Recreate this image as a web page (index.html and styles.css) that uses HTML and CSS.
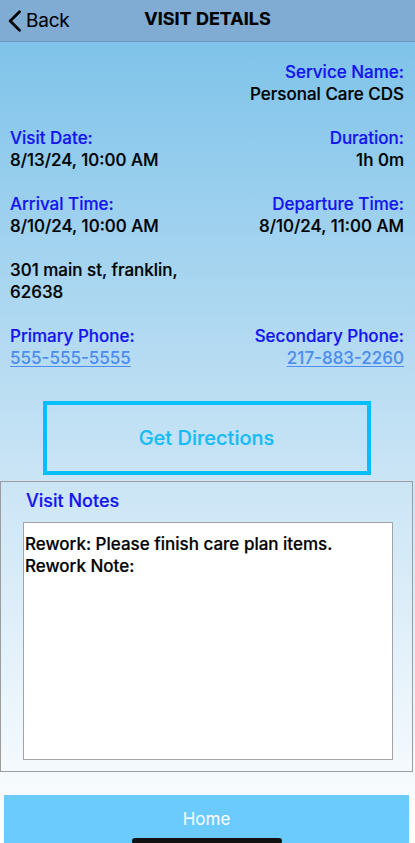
FILE: index.html
```html
<!DOCTYPE html>
<html>
<head>
<meta charset="utf-8">
<link rel="stylesheet" href="styles.css">
</head>
<body>
<div class="screen">
  <header class="topbar">
    <div class="back">
      <svg class="chev" width="15" height="22" viewBox="0 0 15 22"><path d="M12.5 1.8 L3.2 11 L12.5 20.2" fill="none" stroke="#000" stroke-width="2.8" stroke-linecap="round" stroke-linejoin="round"/></svg>
      <span>Back</span>
    </div>
    <div class="title">VISIT DETAILS</div>
  </header>
  <main class="content">
    <div class="details">
      <div class="row right-only">
        <div class="field right">
          <div class="label">Service Name:</div>
          <div class="value">Personal Care CDS</div>
        </div>
      </div>
      <div class="row">
        <div class="field">
          <div class="label">Visit Date:</div>
          <div class="value">8/13/24, 10:00 AM</div>
        </div>
        <div class="field right">
          <div class="label">Duration:</div>
          <div class="value">1h 0m</div>
        </div>
      </div>
      <div class="row">
        <div class="field">
          <div class="label">Arrival Time:</div>
          <div class="value">8/10/24, 10:00 AM</div>
        </div>
        <div class="field right">
          <div class="label">Departure Time:</div>
          <div class="value">8/10/24, 11:00 AM</div>
        </div>
      </div>
      <div class="row">
        <div class="field address">
          <div class="value">301 main st, franklin,<br>62638</div>
        </div>
      </div>
      <div class="row">
        <div class="field">
          <div class="label">Primary Phone:</div>
          <a class="phone" href="#">555-555-5555</a>
        </div>
        <div class="field right">
          <div class="label">Secondary Phone:</div>
          <a class="phone" href="#">217-883-2260</a>
        </div>
      </div>
    </div>
    <div class="btn-wrap">
      <div class="directions">Get Directions</div>
    </div>
    <section class="notes">
      <div class="notes-title">Visit Notes</div>
      <div class="notes-box">Rework: Please finish care plan items.<br>Rework Note:</div>
    </section>
    <div class="home-wrap">
      <div class="home">Home</div>
    </div>
  </main>
  <div class="indicator"></div>
</div>
</body>
</html>
```
FILE: styles.css
```css
* { box-sizing: border-box; }
html, body { margin: 0; padding: 0; }
body {
  width: 415px;
  height: 843px;
  overflow: hidden;
  font-family: Inter, "Noto Sans", sans-serif;
  font-size: 17px;
  color: #000;
  -webkit-text-stroke: 0.2px currentColor;
}
.screen {
  position: relative;
  width: 415px;
  height: 843px;
  display: flex;
  flex-direction: column;
  background: linear-gradient(to bottom, #7fc3ea 0px, #7fc3ea 42px, #c9e4f5 470px, #f7fbfe 790px, #ffffff 843px);
}
.topbar {
  height: 42px;
  background: #80acd4;
  border-bottom: 1px solid #6e98bf;
  display: flex;
  align-items: center;
  position: relative;
  flex: none;
}
.back {
  display: flex;
  align-items: center;
  gap: 4px;
  padding-left: 7px;
  font-size: 19px;
  letter-spacing: -0.2px;
  -webkit-text-stroke: 0.1px currentColor;
}
.chev { display: block; }
.title {
  position: absolute;
  left: 0;
  right: 0;
  top: 0;
  height: 41px;
  line-height: 38px;
  text-align: center;
  font-weight: 700;
  font-size: 18px;
  -webkit-text-stroke: 0.2px currentColor;
  pointer-events: none;
}
.content {
  flex: 1;
  display: flex;
  flex-direction: column;
}
.details {
  padding: 19px 11px 0 10px;
  display: flex;
  flex-direction: column;
  gap: 22px;
}
.row {
  display: flex;
  justify-content: space-between;
}
.right-only { justify-content: flex-end; }
.field { line-height: 22px; }
.field.right { text-align: right; }
.label {
  color: #1414ee;
  font-weight: 500;
}
.value { font-weight: 500; }
.phone {
  color: #4d8df0;
  text-decoration: underline;
  text-underline-offset: 2px;
  font-weight: 500;
  -webkit-text-stroke: 0.1px currentColor;
}
.btn-wrap {
  display: flex;
  justify-content: center;
  padding-top: 32px;
  padding-right: 2px;
}
.directions {
  width: 328px;
  height: 74px;
  border: 4px solid #05bffb;
  display: flex;
  align-items: center;
  justify-content: center;
  color: #16bcf6;
  font-size: 20px;
  font-weight: 500;
}
.notes {
  margin-top: 6px;
  width: 413px;
  height: 291px;
  border: 1px solid #9c9c9c;
  padding: 8px 20px 0 22px;
}
.notes-title {
  color: #1414ee;
  font-size: 18px;
  font-weight: 500;
  line-height: 22px;
  padding-left: 3px;
}
.notes-box {
  margin-top: 10px;
  width: 370px;
  height: 238px;
  background: #fff;
  border: 1px solid #a3a3a3;
  padding: 10px 0 0 1px;
  line-height: 22px;
  font-weight: 500;
}
.home-wrap {
  padding: 23px 6px 0 4px;
}
.home {
  height: 60px;
  background: #6bcbfd;
  color: #fff;
  text-align: center;
  padding-top: 12px;
  line-height: 24px;
  font-size: 17px;
  -webkit-text-stroke: 0;
}
.indicator {
  position: absolute;
  left: 132px;
  top: 838px;
  width: 150px;
  height: 6px;
  border-radius: 3px;
  background: #111;
}
```
